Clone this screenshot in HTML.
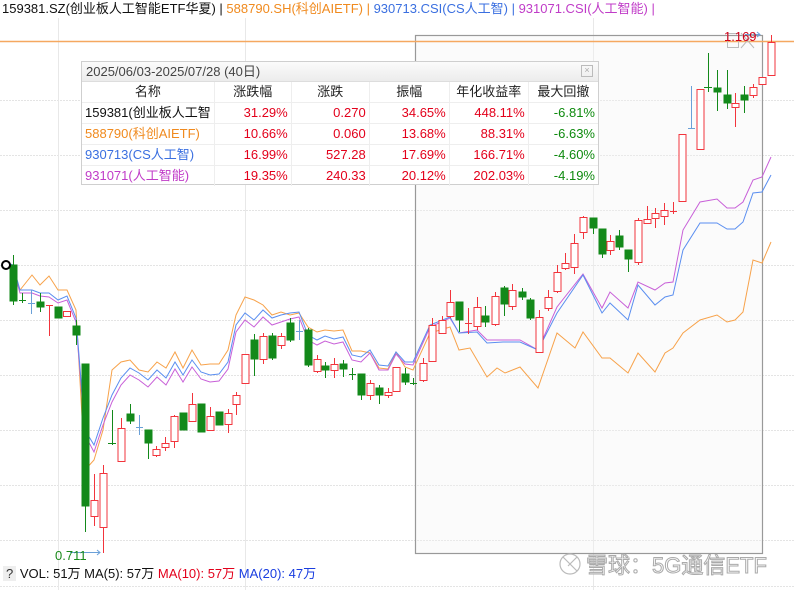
<!DOCTYPE html>
<html><head><meta charset="utf-8"><style>
body{margin:0;width:794px;height:590px;overflow:hidden;background:#fff;font-family:"Liberation Sans","Noto Sans CJK SC",sans-serif;position:relative}
.t{position:absolute;white-space:nowrap}
#tb{position:absolute;left:81px;top:61px;width:516px;height:122px;border:1px solid #cfcfcf;background:#fff;font-size:13px}
#tb .h{height:19px;background:linear-gradient(#fbfbfb,#ececec);border-bottom:1px solid #ddd;color:#444;line-height:19px;padding-left:4px;position:relative}
#tb table{border-collapse:collapse;width:100%}
#tb td{height:20px;border-right:1px solid #eee;border-bottom:1px solid #eee;text-align:right;padding:0 3px;line-height:20px;white-space:nowrap;overflow:hidden}
.r{color:#e3001b}.g{color:#0e8a0e}
</style></head><body>
<div class="t" style="left:2px;top:1px;font-size:13px;line-height:16px"><span style="color:#111">159381.SZ(创业板人工智能ETF华夏) | </span><span style="color:#f08a1e">588790.SH(科创AIETF) | </span><span style="color:#3a6fe0">930713.CSI(CS人工智) | </span><span style="color:#c03cc8">931071.CSI(人工智能) |</span></div>
<svg width="794" height="590" style="position:absolute;left:0;top:0" xmlns="http://www.w3.org/2000/svg">
<g stroke="#e4e4e4" stroke-width="1" stroke-dasharray="2,1">
<line x1="0" y1="100.5" x2="794" y2="100.5"/><line x1="0" y1="155.5" x2="794" y2="155.5"/><line x1="0" y1="210.5" x2="794" y2="210.5"/><line x1="0" y1="265.5" x2="794" y2="265.5"/><line x1="0" y1="320.5" x2="794" y2="320.5"/><line x1="0" y1="375.5" x2="794" y2="375.5"/><line x1="0" y1="430.5" x2="794" y2="430.5"/><line x1="0" y1="485.5" x2="794" y2="485.5"/><line x1="0" y1="540.5" x2="794" y2="540.5"/><line x1="0" y1="586.5" x2="794" y2="586.5"/>
</g>
<g stroke="#e8e8e8"><line x1="58.5" y1="18" x2="58.5" y2="590"/><line x1="245.5" y1="18" x2="245.5" y2="590"/><line x1="593.5" y1="18" x2="593.5" y2="590"/></g>
<rect x="415.5" y="35.5" width="347" height="518" fill="#f4f4f4" fill-opacity="0.35" stroke="#999" stroke-width="1.2"/>
<line x1="0" y1="41.5" x2="794" y2="41.5" stroke="#f5a860" stroke-width="1.5"/>
<g fill="none" stroke-width="1">
<polyline stroke="#f7a24a" points="5,265 13,270 20,290 32,275 40,285 49,276 58,290 67,290 76,310 85,470 94,460 103,430 112,370 121,362 130,360 139,370 148,372 157,362 166,368 175,352 183,368 192,350 201,365 210,364 219,364 228,350 236,315 245,297 254,300 263,305 272,315 281,312 290,315 299,313 308,327 317,332 325,330 334,331 343,330 352,351 361,351 370,353 379,368 388,369 396,352 405,367 413,370 430,333 450,327 459,350 470,348 487,377 497,368 505,373 520,367 538,388 557,333 575,348 583,332 602,358 610,358 628,373 638,353 655,372 665,353 673,348 683,333 700,320 717,315 727,322 735,320 743,312 753,260 762,263 771,242"/>
<polyline stroke="#c860d8" points="5,262 13,268 20,293 32,293 40,296 49,297 58,303 67,300 76,322 85,435 94,452 103,425 112,402 121,385 130,375 139,380 148,387 157,377 166,385 175,369 183,382 192,367 201,379 210,382 219,381 228,369 236,332 245,320 254,327 263,317 272,325 281,322 290,319 299,317 308,340 317,345 325,341 334,344 343,342 352,360 361,362 370,353 379,370 388,370 396,354 405,364 413,365 430,327 450,318 459,333 477,330 487,340 503,340 520,340 538,350 557,307 583,274 602,308 610,292 628,308 638,282 655,290 665,283 673,282 683,230 700,202 717,199 727,208 735,208 743,202 753,180 762,177 771,157"/>
<polyline stroke="#5a8ef0" points="5,262 13,265 20,290 32,290 40,293 49,293 58,300 67,296 76,318 85,430 94,445 103,418 112,395 121,378 130,368 139,373 148,380 157,370 166,378 175,362 183,375 192,360 201,372 210,375 219,374 228,362 236,325 245,313 254,320 263,310 272,318 281,315 290,313 299,312 308,335 317,340 325,336 334,339 343,337 352,355 361,357 370,350 379,365 388,366 396,352 405,362 413,362 430,325 450,317 459,333 477,332 487,343 503,342 520,342 538,350 557,313 583,275 602,313 610,303 628,320 638,285 655,305 665,297 673,295 683,250 700,223 717,223 727,229 735,229 743,222 753,193 762,192 771,175"/>
</g>
<g stroke="#f2343c" fill="#fff" stroke-width="1">
<line x1="49.5" y1="305" x2="49.5" y2="336"/><line x1="46" y1="305.5" x2="53" y2="305.5"/>
<rect x="63.5" y="311.5" width="7" height="5"/>
<line x1="94.5" y1="474" x2="94.5" y2="526"/><rect x="91" y="500.5" width="7" height="16"/>
<line x1="103.5" y1="465" x2="103.5" y2="553"/><rect x="100" y="473.5" width="7" height="54"/>
<line x1="121.5" y1="418" x2="121.5" y2="462"/><rect x="118" y="428.5" width="7" height="33"/>
<line x1="156.5" y1="446" x2="156.5" y2="457"/><rect x="153" y="449.5" width="7" height="6"/>
<line x1="165.5" y1="437" x2="165.5" y2="451"/><rect x="162" y="443.5" width="7" height="4"/>
<line x1="174.5" y1="415" x2="174.5" y2="448"/><rect x="171" y="416.5" width="7" height="25"/>
<line x1="192.5" y1="393" x2="192.5" y2="422"/><rect x="189" y="404.5" width="7" height="17"/>
<line x1="210.5" y1="407" x2="210.5" y2="431"/><rect x="207" y="416.5" width="7" height="14"/>
<line x1="228.5" y1="409" x2="228.5" y2="433"/><rect x="225" y="413.5" width="7" height="11"/>
<line x1="236.5" y1="392" x2="236.5" y2="415"/><rect x="233" y="395.5" width="7" height="9"/>
<rect x="242" y="354.5" width="7" height="29"/>
<line x1="263.5" y1="333" x2="263.5" y2="364"/><rect x="260" y="336.5" width="7" height="23"/>
<line x1="281.5" y1="333" x2="281.5" y2="349"/><rect x="278" y="336.5" width="7" height="9"/>
<line x1="317.5" y1="355" x2="317.5" y2="373"/><rect x="314" y="359.5" width="7" height="12"/>
<line x1="334.5" y1="358" x2="334.5" y2="378"/><rect x="331" y="364.5" width="7" height="6"/>
<line x1="370.5" y1="380" x2="370.5" y2="400"/><rect x="367" y="383.5" width="7" height="12"/>
<line x1="388.5" y1="388" x2="388.5" y2="398"/><rect x="385" y="392.5" width="7" height="3"/>
<rect x="393" y="367.5" width="7" height="24"/>
<line x1="423.5" y1="358" x2="423.5" y2="382"/><rect x="420" y="363.5" width="7" height="17"/>
<line x1="432.5" y1="318" x2="432.5" y2="362"/><rect x="429" y="325.5" width="7" height="36"/>
<line x1="442.5" y1="316" x2="442.5" y2="334"/><rect x="439" y="320.5" width="7" height="13"/>
<line x1="450.5" y1="290" x2="450.5" y2="318"/><rect x="447" y="302.5" width="7" height="14"/>
<line x1="468.5" y1="308" x2="468.5" y2="334"/><line x1="465" y1="323.5" x2="472" y2="323.5"/>
<line x1="477.5" y1="297" x2="477.5" y2="330"/><rect x="474" y="307.5" width="7" height="19"/>
<line x1="495.5" y1="292" x2="495.5" y2="326"/><rect x="492" y="296.5" width="7" height="28"/>
<line x1="512.5" y1="284" x2="512.5" y2="310"/><rect x="509" y="290.5" width="7" height="16"/>
<line x1="539.5" y1="310" x2="539.5" y2="353"/><rect x="536" y="317.5" width="7" height="35"/>
<line x1="548.5" y1="290" x2="548.5" y2="311"/><rect x="545" y="297.5" width="7" height="11"/>
<line x1="557.5" y1="265" x2="557.5" y2="293"/><rect x="554" y="272.5" width="7" height="19"/>
<line x1="565.5" y1="253" x2="565.5" y2="270"/><rect x="562" y="263.5" width="7" height="5"/>
<line x1="574.5" y1="234" x2="574.5" y2="274"/><rect x="571" y="243.5" width="7" height="24"/>
<line x1="583.5" y1="216" x2="583.5" y2="239"/><rect x="580" y="217.5" width="7" height="15"/>
<line x1="610.5" y1="235" x2="610.5" y2="255"/><rect x="607" y="241.5" width="7" height="9"/>
<line x1="638.5" y1="218" x2="638.5" y2="265"/><rect x="635" y="220.5" width="7" height="42"/>
<line x1="647.5" y1="206" x2="647.5" y2="224"/><rect x="644" y="219.5" width="7" height="4"/>
<line x1="655.5" y1="208" x2="655.5" y2="228"/><rect x="652" y="213.5" width="7" height="5"/>
<line x1="664.5" y1="203" x2="664.5" y2="225"/><rect x="661" y="210.5" width="7" height="6"/>
<line x1="673.5" y1="202" x2="673.5" y2="214"/><line x1="670" y1="211.5" x2="677" y2="211.5"/>
<rect x="679" y="134.5" width="7" height="67"/>
<rect x="697" y="89.5" width="7" height="60"/>
<line x1="735.5" y1="93" x2="735.5" y2="127"/><rect x="732" y="103.5" width="7" height="4"/>
<line x1="753.5" y1="84" x2="753.5" y2="98"/><rect x="750" y="87.5" width="7" height="8"/>
<rect x="759" y="77.5" width="7" height="7"/>
<line x1="771.5" y1="35" x2="771.5" y2="42"/><rect x="768" y="42.5" width="7" height="33"/>
</g>
<g fill="#13891a" stroke="#13891a">
<line x1="13.5" y1="255" x2="13.5" y2="305"/><rect x="10" y="265" width="7" height="36"/>
<line x1="22.5" y1="293" x2="22.5" y2="303"/><line x1="19" y1="300.5" x2="26" y2="300.5"/>
<line x1="40.5" y1="293" x2="40.5" y2="312"/><rect x="37" y="302" width="7" height="5"/>
<rect x="55" y="307" width="7" height="11"/>
<line x1="76.5" y1="320" x2="76.5" y2="345"/><rect x="73" y="326" width="7" height="9"/>
<line x1="85.5" y1="364" x2="85.5" y2="532"/><rect x="82" y="364" width="7" height="142"/>
<line x1="112.5" y1="410" x2="112.5" y2="445"/><line x1="108" y1="443.5" x2="116" y2="443.5"/>
<line x1="130.5" y1="404" x2="130.5" y2="424"/><rect x="127" y="414" width="7" height="7"/>
<line x1="148.5" y1="430" x2="148.5" y2="459"/><rect x="145" y="430" width="7" height="13"/>
<rect x="180" y="413" width="7" height="17"/>
<rect x="198" y="404" width="7" height="28"/>
<rect x="216" y="412" width="7" height="13"/>
<line x1="254.5" y1="334" x2="254.5" y2="376"/><rect x="251" y="340" width="7" height="19"/>
<line x1="272.5" y1="333" x2="272.5" y2="360"/><rect x="269" y="336" width="7" height="22"/>
<line x1="290.5" y1="318" x2="290.5" y2="342"/><rect x="287" y="323" width="7" height="17"/>
<line x1="308.5" y1="328" x2="308.5" y2="367"/><rect x="305" y="330" width="7" height="35"/>
<line x1="325.5" y1="362" x2="325.5" y2="378"/><rect x="322" y="366" width="7" height="4"/>
<line x1="343.5" y1="360" x2="343.5" y2="377"/><rect x="340" y="364" width="7" height="5"/>
<line x1="352.5" y1="368" x2="352.5" y2="380"/><line x1="349" y1="374.5" x2="356" y2="374.5"/>
<line x1="361.5" y1="374" x2="361.5" y2="400"/><rect x="358" y="374" width="7" height="21"/>
<line x1="379.5" y1="385" x2="379.5" y2="404"/><rect x="376" y="388" width="7" height="7"/>
<line x1="405.5" y1="368" x2="405.5" y2="385"/><rect x="402" y="374" width="7" height="8"/>
<line x1="413.5" y1="378" x2="413.5" y2="385"/><line x1="410" y1="383.5" x2="417" y2="383.5"/>
<line x1="459.5" y1="302" x2="459.5" y2="332"/><rect x="456" y="302" width="7" height="18"/>
<line x1="485.5" y1="306" x2="485.5" y2="327"/><rect x="482" y="316" width="7" height="6"/>
<line x1="504.5" y1="286" x2="504.5" y2="316"/><rect x="501" y="288" width="7" height="16"/>
<line x1="522.5" y1="288" x2="522.5" y2="300"/><rect x="519" y="292" width="7" height="5"/>
<line x1="530.5" y1="298" x2="530.5" y2="320"/><rect x="527" y="300" width="7" height="18"/>
<line x1="593.5" y1="218" x2="593.5" y2="234"/><rect x="590" y="218" width="7" height="10"/>
<line x1="602.5" y1="229" x2="602.5" y2="258"/><rect x="599" y="229" width="7" height="25"/>
<line x1="619.5" y1="230" x2="619.5" y2="250"/><rect x="616" y="236" width="7" height="11"/>
<line x1="628.5" y1="250" x2="628.5" y2="272"/><rect x="625" y="250" width="7" height="9"/>
<line x1="708.5" y1="53" x2="708.5" y2="92"/><line x1="704" y1="87.5" x2="712" y2="87.5"/>
<line x1="717.5" y1="70" x2="717.5" y2="111"/><rect x="714" y="88" width="7" height="4"/>
<line x1="727.5" y1="70" x2="727.5" y2="109"/><rect x="724" y="95" width="7" height="8"/>
<line x1="744.5" y1="86" x2="744.5" y2="113"/><rect x="741" y="95" width="7" height="5"/>
</g>
<g stroke="#6aa0d8"><line x1="31.5" y1="290" x2="31.5" y2="314"/><line x1="28" y1="303.5" x2="35" y2="303.5"/>
<line x1="139.5" y1="415" x2="139.5" y2="435"/><line x1="136" y1="427.5" x2="143" y2="427.5"/>
<line x1="299.5" y1="320" x2="299.5" y2="340"/><line x1="296" y1="331.5" x2="303" y2="331.5"/>
<line x1="691.5" y1="86" x2="691.5" y2="129"/><line x1="688" y1="128.5" x2="695" y2="128.5"/>
<line x1="745" y1="34.5" x2="760" y2="34.5"/><polyline fill="none" points="757,32 760,34.5 757,37"/>
<line x1="70" y1="552.5" x2="100" y2="552.5"/><polyline fill="none" points="97,550 100,552.5 97,555"/></g>
<circle cx="6" cy="265" r="4" fill="#fff" stroke="#000" stroke-width="2"/>
<g stroke="#bbb" fill="none"><rect x="727.5" y="33.5" width="11" height="14"/><line x1="741" y1="33" x2="754" y2="48"/><line x1="754" y1="33" x2="741" y2="48"/></g>
<text x="724" y="41" fill="#d0021b" font-size="13" font-family="Liberation Sans">1.169</text>
<text x="55" y="560" fill="#1a8a1a" font-size="13" font-family="Liberation Sans">0.711</text>
<g fill="#fff" stroke="#bbb" stroke-width="1.2"><circle cx="570" cy="564" r="10"/><path d="M563 557 L577 571 M577 557 L568 566" fill="none"/></g>
<text x="586" y="573" fill="#fff" stroke="#aaa" stroke-width="1" font-size="22" font-family="Liberation Sans,Noto Sans CJK SC,sans-serif">雪球：5G通信ETF</text>
</svg>
<div class="t" style="left:3px;top:565px;font-size:13px;line-height:18px"><span style="background:#eee;padding:0 3px;color:#333">?</span> <span style="color:#111">VOL: 51万 MA(5): 57万 </span><span style="color:#e3001b">MA(10): 57万 </span><span style="color:#1a3ee0">MA(20): 47万</span></div>
<div id="tb"><div class="h">2025/06/03-2025/07/28 (40日)<span style="position:absolute;right:5px;top:3px;width:10px;height:10px;border:1px solid #bbb;font-size:9px;line-height:9px;text-align:center;color:#aaa">×</span></div>
<table>
<tr style="color:#222"><td style="text-align:center;width:118px">名称</td><td style="text-align:center;width:70px">涨跌幅</td><td style="text-align:center;width:71px">涨跌</td><td style="text-align:center;width:73px">振幅</td><td style="text-align:center;width:72px">年化收益率</td><td style="text-align:center;border-right:none">最大回撤</td></tr>
<tr><td style="text-align:left;color:#111">159381(创业板人工智</td><td class="r">31.29%</td><td class="r">0.270</td><td class="r">34.65%</td><td class="r">448.11%</td><td class="g" style="border-right:none">-6.81%</td></tr>
<tr><td style="text-align:left;color:#f08a1e">588790(科创AIETF)</td><td class="r">10.66%</td><td class="r">0.060</td><td class="r">13.68%</td><td class="r">88.31%</td><td class="g" style="border-right:none">-6.63%</td></tr>
<tr><td style="text-align:left;color:#3a6fe0">930713(CS人工智)</td><td class="r">16.99%</td><td class="r">527.28</td><td class="r">17.69%</td><td class="r">166.71%</td><td class="g" style="border-right:none">-4.60%</td></tr>
<tr><td style="text-align:left;color:#c03cc8;border-bottom:none">931071(人工智能)</td><td class="r" style="border-bottom:none">19.35%</td><td class="r" style="border-bottom:none">240.33</td><td class="r" style="border-bottom:none">20.12%</td><td class="r" style="border-bottom:none">202.03%</td><td class="g" style="border:none">-4.19%</td></tr>
</table></div>
</body></html>
